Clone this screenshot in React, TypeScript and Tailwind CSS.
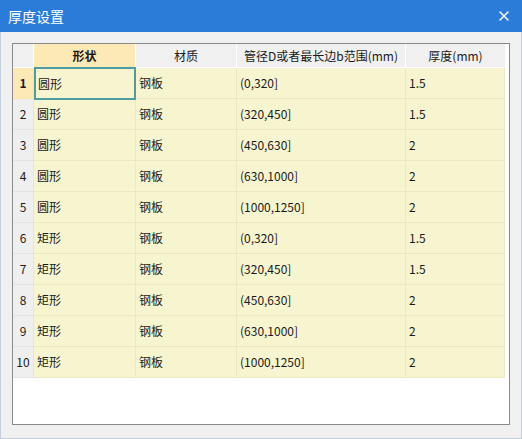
import { X } from "lucide-react";

const rows = [
	["圆形", "钢板", "(0,320]", "1.5"],
	["圆形", "钢板", "(320,450]", "1.5"],
	["圆形", "钢板", "(450,630]", "2"],
	["圆形", "钢板", "(630,1000]", "2"],
	["圆形", "钢板", "(1000,1250]", "2"],
	["矩形", "钢板", "(0,320]", "1.5"],
	["矩形", "钢板", "(320,450]", "1.5"],
	["矩形", "钢板", "(450,630]", "2"],
	["矩形", "钢板", "(630,1000]", "2"],
	["矩形", "钢板", "(1000,1250]", "2"],
];

const font = {
	fontFamily: '"Noto Sans CJK SC", "Liberation Sans", sans-serif',
};

export default function App() {
	return (
		<div
			className="w-[522px] h-[439px] flex flex-col bg-[#f0f0f0] border-x border-b border-[#c5cfdc] text-[#1a1a1a]"
			style={font}
		>
			<div className="h-[32px] shrink-0 bg-[#2b7bd9] flex items-center justify-between pl-[8px] pr-[10px] -mx-px">
				<span className="text-[14px] text-white">厚度设置</span>
				<X size={16} strokeWidth={2} className="text-white" />
			</div>
			<div className="flex-1 pt-[11px] pl-[11px]">
				<div className="w-[498px] h-[382px] border border-[#8a8a8a] bg-white">
					<div className="grid grid-cols-[21px_102px_101px_169px_99px] text-[12px]">
						<div className="h-[24px] bg-[#f0f0f0] border-r border-b border-white" />
						<div className="h-[24px] bg-[#fde9b5] border-r border-b border-white flex items-center justify-center font-bold">
							形状
						</div>
						<div className="h-[24px] bg-[#f0f0f0] border-r border-b border-white flex items-center justify-center">
							材质
						</div>
						<div className="h-[24px] bg-[#f0f0f0] border-r border-b border-white flex items-center justify-center">
							管径D或者最长边b范围(mm)
						</div>
						<div className="h-[24px] bg-[#f0f0f0] border-b border-white flex items-center justify-center">
							厚度(mm)
						</div>
						{rows.map((r, i) => (
							<Row key={i} n={i + 1} cells={r} />
						))}
					</div>
				</div>
			</div>
		</div>
	);
}

function Row({ n, cells }: { n: number; cells: string[] }) {
	const first = n === 1;
	return (
		<>
			<div
				className={
					first
						? "h-[31px] bg-[#fde9b5] border-r border-b border-[#f6e3b0] flex items-center justify-center font-bold"
						: "h-[31px] bg-[#efefef] border-r border-b border-[#e4e4e4] flex items-center justify-center"
				}
			>
				{n}
			</div>
			{cells.map((c, j) => (
				<div
					key={j}
					className={
						first && j === 0
							? "h-[31px] bg-[#f7f5cf] border-2 border-[#4f9ca2] -mt-px -mb-px h-[33px] flex items-center pl-[2px] relative"
							: "h-[31px] bg-[#f7f5cf] border-r border-b border-[#ebe8c6] flex items-center pl-[3px]"
					}
				>
					{c}
				</div>
			))}
		</>
	);
}
